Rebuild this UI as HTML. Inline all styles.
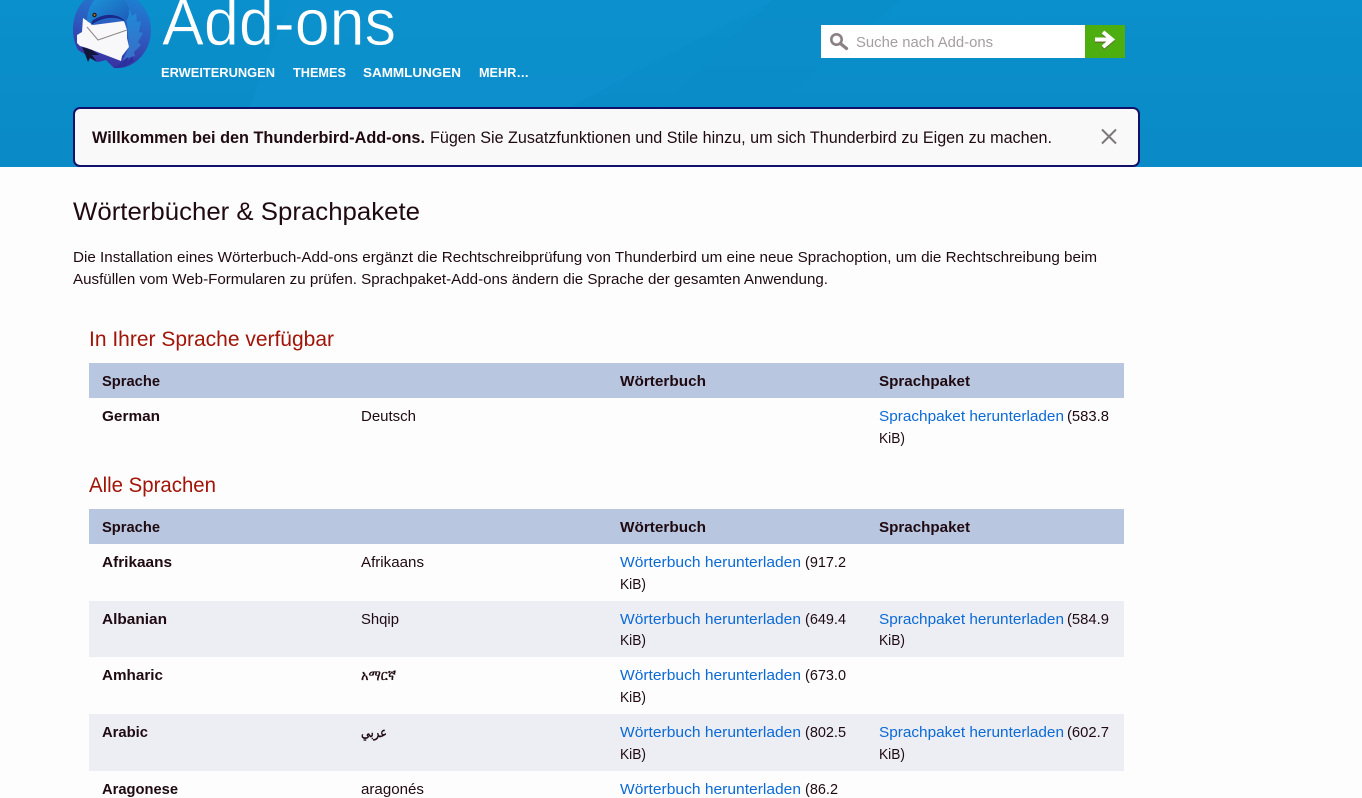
<!DOCTYPE html>
<html lang="de">
<head>
<meta charset="utf-8">
<title>Wörterbücher &amp; Sprachpakete</title>
<style>
html,body{margin:0;padding:0;width:1362px;height:798px;overflow:hidden;background:#fdfdfe}
svg{display:block;position:absolute;left:0;top:0}
text{font-family:"Liberation Sans","DejaVu Sans",sans-serif;font-size:15px;fill:#1f0a12}
.b{font-weight:700}
.l{fill:#0b6ad6}
.h2{font-size:21px;fill:#a11407}
.nav{font-size:12.8px;font-weight:700;fill:#fff}
</style>
</head>
<body>
<svg width="1362" height="798" viewBox="0 0 1362 798" xmlns="http://www.w3.org/2000/svg">
<defs>
<linearGradient id="hd" x1="0" y1="0" x2="0" y2="1">
<stop offset="0" stop-color="#0a90cc"/><stop offset="1" stop-color="#0a8ac6"/>
</linearGradient>
<linearGradient id="ring" x1="0.8" y1="0" x2="0.5" y2="1">
<stop offset="0" stop-color="#1b86d6"/><stop offset="0.5" stop-color="#2d5cc0"/><stop offset="1" stop-color="#3a2fa0"/>
</linearGradient>
<linearGradient id="head" x1="0" y1="0" x2="1" y2="1">
<stop offset="0" stop-color="#1c9adb"/><stop offset="1" stop-color="#1d58b8"/>
</linearGradient>
<linearGradient id="wing" x1="0" y1="0" x2="0" y2="1">
<stop offset="0" stop-color="#1f8ad6"/><stop offset="1" stop-color="#3a6cc8"/>
</linearGradient>
</defs>

<!-- header -->
<rect width="1362" height="167" fill="url(#hd)"/>
<polygon points="0,0 772,0 570,107 250,107 290,0" fill="#1096d0" opacity=".35"/>
<polygon points="772,0 900,0 700,167 600,167" fill="#0a8bc8" opacity=".5"/>

<!-- logo -->
<path d="M90 -4 C80 2 73 14 73 30 C73 38 75 44 78 50 L98 62 L106 60 L114 68 C134 70 151 52 151 30 C151 12 138 -7 118 -7 Z" fill="url(#ring)"/>
<polygon points="130,10 132,16 136,13 137,22 141,21 139,32 143,33 138,42 141,45 134,52 135,56 128,58 122,62 129,47 127,22 122,16" fill="url(#wing)"/>
<path d="M115 68 L124 60 L128 57 L127 63 L133 56 L133 62 L139 54 C134 62 125 68 115 68Z" fill="#2c2f9e"/>
<polygon points="83,18 93,25 124,21 127,30 127,38 129,47 122,56 121,61 87,48 80,46 77,43 77,35 82,32" fill="#f8f7f9"/>
<path d="M87 27 L98 40 L127 30" fill="none" stroke="#8f8a8c" stroke-width="1"/>
<path d="M82 47 L92 50 L99 55 L92 55 L97 62 L90 58 L88 62 L85 54 Z" fill="#12153a"/>
<path d="M87 21 C87 12 91 2 97 -2 C110 -9 124 -4 128 6 C130 12 129 18 125 22 C118 17 106 17 93 25 Z" fill="url(#head)"/>
<path d="M91 25 C104 16 118 16 125 22 L124 20 C116 13 103 13 92 21Z" fill="#1b2a8a"/>
<circle cx="94.500" cy="15" r="2.200" fill="#231b10"/>
<circle cx="94.500" cy="15" r="1" fill="#b0792a"/>

<!-- title + nav -->
<text x="162" y="45" style="font-size:66px;fill:#fff;stroke:#0a90cc;stroke-width:.7px" textLength="234" lengthAdjust="spacingAndGlyphs">Add-ons</text>
<text class="nav" x="161" y="77" textLength="114" lengthAdjust="spacingAndGlyphs">ERWEITERUNGEN</text>
<text class="nav" x="293" y="77" textLength="53" lengthAdjust="spacingAndGlyphs">THEMES</text>
<text class="nav" x="363" y="77" textLength="98" lengthAdjust="spacingAndGlyphs">SAMMLUNGEN</text>
<text class="nav" x="479" y="77" textLength="50" lengthAdjust="spacingAndGlyphs">MEHR…</text>

<!-- search -->
<rect x="821" y="25" width="264" height="33" fill="#fff"/>
<rect x="1085" y="25" width="40" height="33" fill="#4cae0f"/>
<circle cx="836.500" cy="39.500" r="5.200" fill="none" stroke="#8b8083" stroke-width="2.600"/>
<path d="M841 44 L846.500 48.500" stroke="#8b8083" stroke-width="3.200" stroke-linecap="round"/>
<text x="856" y="47" style="fill:#a59da1" textLength="137" lengthAdjust="spacingAndGlyphs">Suche nach Add-ons</text>
<path d="M1095 41 H1109 M1103 33.500 L1112 41 L1103 48.500" fill="none" stroke="#5f7a2a" stroke-width="4"/>
<path d="M1095 39.500 H1109 M1103 32 L1112 39.500 L1103 47" fill="none" stroke="#fff" stroke-width="4"/>

<!-- notice -->
<rect x="74" y="108" width="1065" height="58" rx="6" ry="6" fill="#f9f9fa" stroke="#12116a" stroke-width="2"/>
<text x="92" y="143" class="b" style="font-size:16.500px" textLength="333" lengthAdjust="spacingAndGlyphs">Willkommen bei den Thunderbird-Add-ons.</text>
<text x="430" y="143" style="font-size:16.500px" textLength="622" lengthAdjust="spacingAndGlyphs">Fügen Sie Zusatzfunktionen und Stile hinzu, um sich Thunderbird zu Eigen zu machen.</text>
<path d="M1102 129.500 L1116 143.500 M1116 129.500 L1102 143.500" stroke="#7f787a" stroke-width="2" fill="none"/>

<!-- intro -->
<text x="73" y="220" style="font-size:25px" textLength="347" lengthAdjust="spacingAndGlyphs">Wörterbücher &amp; Sprachpakete</text>
<text x="73" y="262" textLength="1024" lengthAdjust="spacingAndGlyphs">Die Installation eines Wörterbuch-Add-ons ergänzt die Rechtschreibprüfung von Thunderbird um eine neue Sprachoption, um die Rechtschreibung beim</text>
<text x="73" y="284" textLength="755" lengthAdjust="spacingAndGlyphs">Ausfüllen vom Web-Formularen zu prüfen. Sprachpaket-Add-ons ändern die Sprache der gesamten Anwendung.</text>

<!-- section 1 -->
<text class="h2" x="89" y="346" textLength="245" lengthAdjust="spacingAndGlyphs">In Ihrer Sprache verfügbar</text>
<rect x="89" y="363" width="1035" height="35" fill="#b8c6df"/>
<text class="b" x="102" y="386" textLength="58" lengthAdjust="spacingAndGlyphs">Sprache</text>
<text class="b" x="620" y="386" textLength="86" lengthAdjust="spacingAndGlyphs">Wörterbuch</text>
<text class="b" x="879" y="386" textLength="91" lengthAdjust="spacingAndGlyphs">Sprachpaket</text>
<text class="b" x="102" y="421" textLength="58" lengthAdjust="spacingAndGlyphs">German</text>
<text x="361" y="421" textLength="55" lengthAdjust="spacingAndGlyphs">Deutsch</text>
<text class="l" x="879" y="421" textLength="185" lengthAdjust="spacingAndGlyphs">Sprachpaket herunterladen</text>
<text x="1067" y="421" textLength="42" lengthAdjust="spacingAndGlyphs">(583.8</text>
<text x="879" y="443" textLength="26" lengthAdjust="spacingAndGlyphs">KiB)</text>

<!-- section 2 -->
<text class="h2" x="89" y="492" textLength="127" lengthAdjust="spacingAndGlyphs">Alle Sprachen</text>
<rect x="89" y="509" width="1035" height="35" fill="#b8c6df"/>
<text class="b" x="102" y="532" textLength="58" lengthAdjust="spacingAndGlyphs">Sprache</text>
<text class="b" x="620" y="532" textLength="86" lengthAdjust="spacingAndGlyphs">Wörterbuch</text>
<text class="b" x="879" y="532" textLength="91" lengthAdjust="spacingAndGlyphs">Sprachpaket</text>

<rect x="89" y="601" width="1035" height="56" fill="#eceef4"/>
<rect x="89" y="714" width="1035" height="57" fill="#eceef4"/>

<text class="b" x="102" y="567" textLength="70" lengthAdjust="spacingAndGlyphs">Afrikaans</text>
<text x="361" y="567" textLength="63" lengthAdjust="spacingAndGlyphs">Afrikaans</text>
<text class="l" x="620" y="567" textLength="181" lengthAdjust="spacingAndGlyphs">Wörterbuch herunterladen</text>
<text x="805" y="567" textLength="41" lengthAdjust="spacingAndGlyphs">(917.2</text>
<text x="620" y="589" textLength="26" lengthAdjust="spacingAndGlyphs">KiB)</text>

<text class="b" x="102" y="624" textLength="65" lengthAdjust="spacingAndGlyphs">Albanian</text>
<text x="361" y="624" textLength="38" lengthAdjust="spacingAndGlyphs">Shqip</text>
<text class="l" x="620" y="624" textLength="181" lengthAdjust="spacingAndGlyphs">Wörterbuch herunterladen</text>
<text x="805" y="624" textLength="41" lengthAdjust="spacingAndGlyphs">(649.4</text>
<text x="620" y="645" textLength="26" lengthAdjust="spacingAndGlyphs">KiB)</text>
<text class="l" x="879" y="624" textLength="185" lengthAdjust="spacingAndGlyphs">Sprachpaket herunterladen</text>
<text x="1067" y="624" textLength="42" lengthAdjust="spacingAndGlyphs">(584.9</text>
<text x="879" y="645" textLength="26" lengthAdjust="spacingAndGlyphs">KiB)</text>

<text class="b" x="102" y="680" textLength="61" lengthAdjust="spacingAndGlyphs">Amharic</text>
<text x="361" y="680" style="font-family:'DejaVu Sans','Noto Sans CJK JP',sans-serif;font-size:14px;stroke:#1f0a12;stroke-width:.35px" textLength="35" lengthAdjust="spacingAndGlyphs">አማርኛ</text>
<text class="l" x="620" y="680" textLength="181" lengthAdjust="spacingAndGlyphs">Wörterbuch herunterladen</text>
<text x="805" y="680" textLength="41" lengthAdjust="spacingAndGlyphs">(673.0</text>
<text x="620" y="702" textLength="26" lengthAdjust="spacingAndGlyphs">KiB)</text>

<text class="b" x="102" y="737" textLength="46" lengthAdjust="spacingAndGlyphs">Arabic</text>
<text x="361" y="737" style="font-family:'DejaVu Sans',sans-serif;font-size:14px;stroke:#1f0a12;stroke-width:.4px" textLength="26" lengthAdjust="spacingAndGlyphs">عربي</text>
<text class="l" x="620" y="737" textLength="181" lengthAdjust="spacingAndGlyphs">Wörterbuch herunterladen</text>
<text x="805" y="737" textLength="41" lengthAdjust="spacingAndGlyphs">(802.5</text>
<text x="620" y="759" textLength="26" lengthAdjust="spacingAndGlyphs">KiB)</text>
<text class="l" x="879" y="737" textLength="185" lengthAdjust="spacingAndGlyphs">Sprachpaket herunterladen</text>
<text x="1067" y="737" textLength="42" lengthAdjust="spacingAndGlyphs">(602.7</text>
<text x="879" y="759" textLength="26" lengthAdjust="spacingAndGlyphs">KiB)</text>

<text class="b" x="102" y="794" textLength="76" lengthAdjust="spacingAndGlyphs">Aragonese</text>
<text x="361" y="794" textLength="63" lengthAdjust="spacingAndGlyphs">aragonés</text>
<text class="l" x="620" y="794" textLength="181" lengthAdjust="spacingAndGlyphs">Wörterbuch herunterladen</text>
<text x="805" y="794" textLength="33" lengthAdjust="spacingAndGlyphs">(86.2</text>
</svg>
</body>
</html>
